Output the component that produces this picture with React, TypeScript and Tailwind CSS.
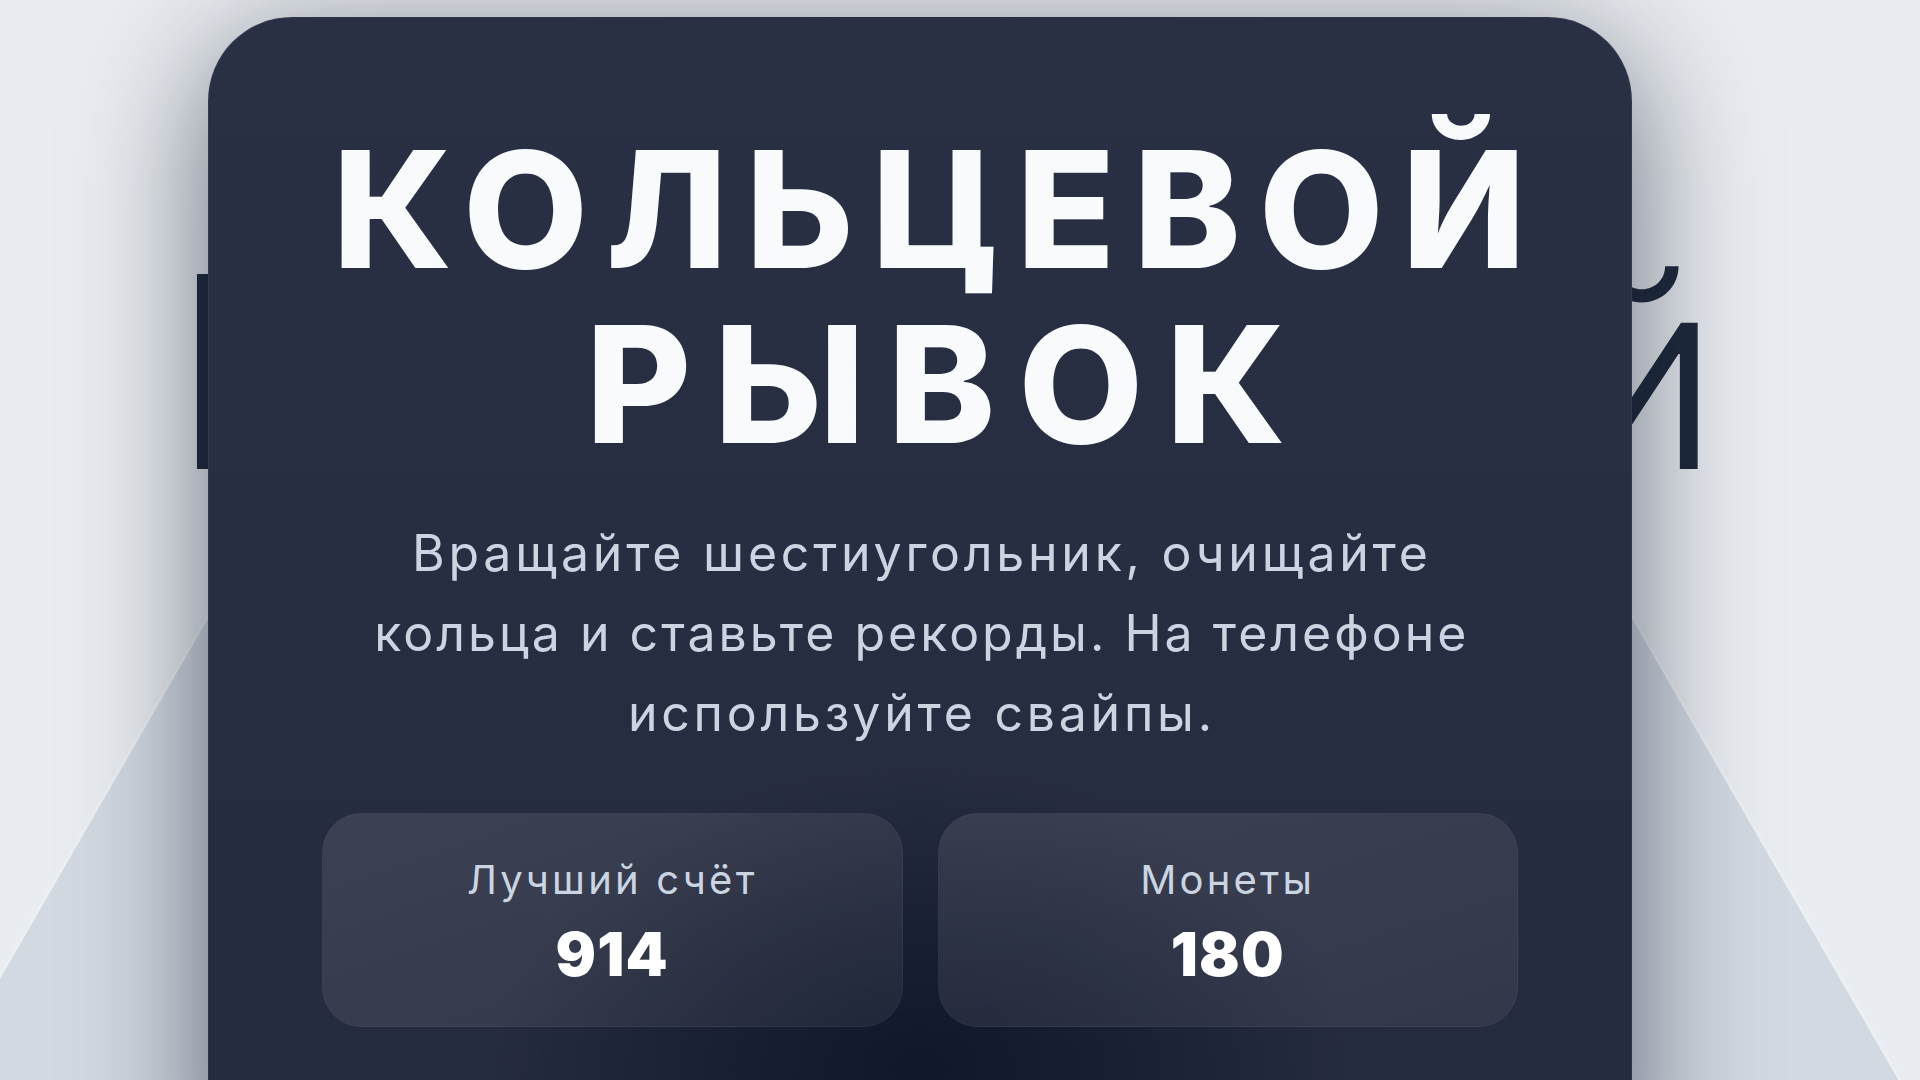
export default function App() {
  const stats = [
    { label: 'Лучший счёт', value: '914' },
    { label: 'Монеты', value: '180' },
  ];

  return (
    <div className="relative h-screen w-full overflow-hidden bg-[#e9ecf0] font-['Inter','Noto_Sans',sans-serif]">
      {/* board hexagon behind the page title */}
      <svg className="absolute inset-0 h-full w-full" viewBox="0 0 1920 1080" preserveAspectRatio="none">
        <polygon
          points="419,250 1421,250 1922,1118 1421,1986 419,1986 -82,1118"
          fill="#d3d9e1"
          stroke="#edf0f3"
          strokeWidth="3"
        />
      </svg>

      {/* page title, covered by the start dialog */}
      <div className="relative flex justify-center pt-[238px] pr-[10px]">
        <h1 className="text-[268px] font-light leading-none text-[#1e293b] tracking-[0.07em]">Кольцевой</h1>
      </div>

      {/* start dialog */}
      <div className="absolute left-[208px] top-[17px] h-[1200px] w-[1424px] rounded-[84px] border border-white/5 bg-[radial-gradient(ellipse_430px_300px_at_50%_1050px,#0f172a_0%,rgba(15,23,42,0.6)_45%,transparent_100%),linear-gradient(180deg,#2a3044_0%,#252b3e_100%)] shadow-[0_30px_130px_rgba(15,23,42,0.6)]">
        <div className="flex flex-col items-center pt-[104px]">
          <h2 className="text-center text-[162px] font-extrabold leading-[175px] text-[#f8fafc]">
            <span className="block pl-[36px] tracking-[0.11em]">КОЛЬЦЕВОЙ</span>
            <span className="block pl-[54px] tracking-[0.14em]">РЫВОК</span>
          </h2>
          <p className="mt-[41px] pl-[0.075em] text-center text-[50px] leading-[80px] tracking-[0.075em] text-[#cbd5e1]">
            Вращайте шестиугольник, очищайте
            <br />
            <span className="tracking-[0.06em]">кольца и ставьте рекорды. На телефоне</span>
            <br />
            используйте свайпы.
          </p>
          <div className="mt-[60px] grid w-[1196px] grid-cols-2 gap-[35px]">
            {stats.map((s) => (
              <div
                key={s.label}
                className="flex h-[214px] flex-col items-center justify-center gap-[12px] rounded-[40px] border border-white/[0.03] bg-gradient-to-br from-white/[0.10] to-white/[0.06]"
              >
                <span className="text-[40px] leading-[55px] tracking-[0.08em] text-[#cbd5e1]">{s.label}</span>
                <span className="text-[60px] font-black leading-[70px] tracking-[0.02em] text-white">{s.value}</span>
              </div>
            ))}
          </div>
        </div>
      </div>
    </div>
  );
}
